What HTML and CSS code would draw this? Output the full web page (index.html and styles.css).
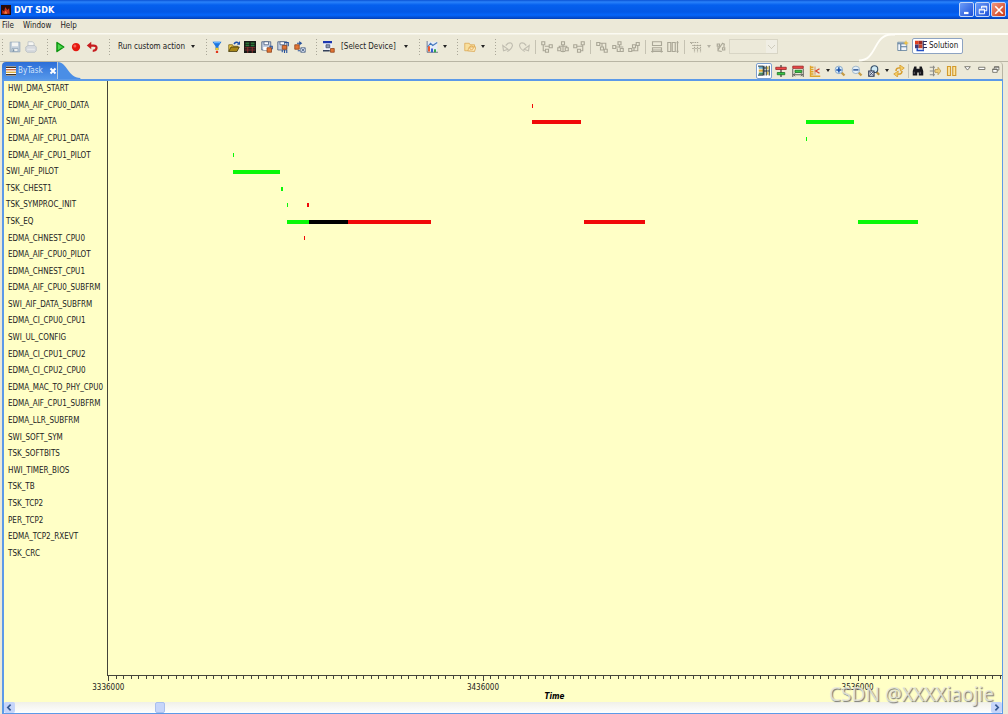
FILE: index.html
```html
<!DOCTYPE html>
<html lang="en">
<head>
<meta charset="utf-8">
<title>DVT SDK</title>
<link rel="stylesheet" href="styles.css">
</head>
<body>
<div class="window">
  <header class="titlebar">
    <svg class="app-icon" viewBox="0 0 16 16"><rect width="16" height="16" fill="#2a0b08"/><path d="M2 14V8l3 2 2-7 3 5 3-3 1 9z" fill="#c8301c"/><path d="M5 14l2-5 2 2 1 3z" fill="#f08040"/></svg>
    <h1 class="title">DVT SDK</h1>
    <button class="win-btn" aria-label="Minimize"><svg viewBox="0 0 16 16"><path d="M4 12h6" stroke="#fff" stroke-width="3"/></svg></button>
    <button class="win-btn" aria-label="Restore"><svg viewBox="0 0 16 16" fill="none" stroke="#fff" stroke-width="1.3"><path d="M6 6V3h7v6h-3M6 4h7M3 7h7v6H3zM3 8h7"/></svg></button>
    <button class="win-btn close" aria-label="Close"><svg viewBox="0 0 16 16"><path d="M3 3l10 10M13 3L3 13" stroke="#fff" stroke-width="2.2"/></svg></button>
  </header>

  <nav class="menubar">
    <button>File</button><button>Window</button><button>Help</button>
  </nav>

  <div class="toolbar">
    <div class="group g-file">
      <button class="tool" aria-label="Save"><svg viewBox="0 0 16 16"><path d="M1.500 1.500h13v13h-13z" fill="#c3cfdb" stroke="#91a6b8"/><path d="M4 2h8v5H4z" fill="#f4f5f2"/><path d="M4 10h8v4H4z" fill="#eef0ee" stroke="#91a6b8"/><path d="M6 11v3" stroke="#7890a6" stroke-width="2"/></svg></button>
      <button class="tool" aria-label="Print"><svg viewBox="0 0 16 16" stroke="#b4bbc2"><path d="M4 7V1h6l2 2v4" fill="#f6f6f2"/><path d="M1 8l3-2h9l2 2v5l-2 2H3l-2-2z" fill="#d7dade"/><path d="M3 11h10" stroke="#f4f4f4"/></svg></button>
    </div>
    <div class="group g-run">
      <button class="tool" aria-label="Run"><svg viewBox="0 0 16 16"><path d="M4 2l9 6-9 6z" fill="#4ed84e" stroke="#0c940f" stroke-width="2" stroke-linejoin="round"/></svg></button>
      <button class="tool" aria-label="Record"><svg viewBox="0 0 16 16"><circle cx="8" cy="8" r="5.500" fill="#e41910"/><circle cx="6.500" cy="6.500" r="2" fill="#fa6055"/></svg></button>
      <button class="tool" aria-label="Restart"><svg viewBox="0 0 16 16"><path d="M4 6h6c6 0 5 7-1 7" fill="none" stroke="#c61d20" stroke-width="3"/><path d="M1 6l6-5v10z" fill="#c61d20"/></svg></button>
    </div>
    <div class="group g-action">
      <button class="text-tool">Run custom action <span class="caret"></span></button>
    </div>
    <div class="group g-capture">
      <button class="tool" aria-label="Filter"><svg viewBox="0 0 16 16"><path d="M2 1h12l-4 6v5H6V7z" fill="#1c76df"/><path d="M4 2h8" stroke="#65b1ff" stroke-width="2"/><path d="M6 9h4v3H6z" fill="#f3cb28"/><path d="M6.500 13h3v3h-3z" fill="#e2361c"/></svg></button>
      <button class="tool" aria-label="Open"><svg viewBox="0 0 16 16"><path d="M1 14V5h5l1 2h6v3" fill="#f0ca48" stroke="#6c5610"/><path d="M1 14l3-6h11l-3 6z" fill="#a88718" stroke="#3e340c"/><path d="M8 4q3-4 6-1" fill="none" stroke="#1c50ae" stroke-width="2"/><path d="M12 5h4V0z" fill="#1c50ae"/></svg></button>
      <button class="tool" aria-label="Grid"><svg viewBox="0 0 16 16"><path d="M0 0h16v16H0z" fill="#181a18"/><path d="M2 2h5v5H2zM9 2h5v5H9z" fill="#2c7b3a"/><path d="M1 9h14M1 12h14M5 8v8M11 8v8" stroke="#a33636"/><path d="M1 4.500h14" stroke="#161816"/></svg></button>
      <button class="tool" aria-label="Save data"><svg viewBox="0 0 16 16"><path d="M1 1h12v11H1z" fill="#c5d1e2" stroke="#40577c"/><path d="M4 1h6v4H4z" fill="#fff" stroke="#40577c"/><path d="M3 8h6v4H3z" fill="#fff"/><path d="M8 9h6v6H8z" fill="#e27433" stroke="#8a3f18"/><path d="M11 7h4v4" fill="none" stroke="#27519b" stroke-width="1.500"/></svg></button>
      <button class="tool" aria-label="Save samples"><svg viewBox="0 0 16 16"><path d="M1 1h12v11H1z" fill="#c5d1e2" stroke="#40577c"/><path d="M4 1h6v4H4z" fill="#fff" stroke="#40577c"/><path d="M7 6h6v5H7z" fill="#e27433" stroke="#8a3f18"/><path d="M10 2h5v5" fill="none" stroke="#27519b" stroke-width="1.500"/><path d="M7 12v3M10 12v4M13 12v4" stroke="#27519b" stroke-width="1.500"/></svg></button>
      <button class="tool" aria-label="Transfer"><svg viewBox="0 0 16 16"><path d="M1 5h6v6H1z" fill="#e27433" stroke="#8a3f18"/><path d="M9 9h6v6H9z" fill="#dfe8f5" stroke="#40577c"/><path d="M10 10l4 4m0-4l-4 4" stroke="#40577c"/><path d="M4 3h5M5 13h3" stroke="#27519b" stroke-width="1.500"/><path d="M7 0v6l4-3z" fill="#27519b"/></svg></button>
    </div>
    <div class="group g-device">
      <button class="tool" aria-label="Device"><svg viewBox="0 0 16 16"><path d="M1 1h11v11H1z" fill="#eef1fa"/><path d="M0 1.500h12" stroke="#1b36b0" stroke-width="3"/><path d="M4 5h5v4H4z" fill="#8e9ab5" stroke="#404b66"/><path d="M0 13h9" stroke="#35415b" stroke-width="2"/><path d="M10 10h5v5h-5z" fill="#e27433" stroke="#8a3f18"/></svg></button>
      <button class="text-tool">[Select Device] <span class="caret"></span></button>
    </div>
    <div class="group g-menu">
      <button class="tool" aria-label="Charts"><svg viewBox="0 0 16 16"><path d="M1 1h14v13H1z" fill="#e6edf7"/><path d="M1.500 0v15H16" fill="none" stroke="#475676"/><path d="M2 8l4-5 3 3 6-4" fill="none" stroke="#4578bd" stroke-width="1.500"/><path d="M4 7v7" stroke="#ec5022" stroke-width="2.500"/><path d="M8 10v5" stroke="#2c55cf" stroke-width="2.500"/><path d="M12 11v4" stroke="#27a442" stroke-width="2.500"/></svg></button>
      <button class="drop" aria-label="Chart menu"><span class="caret"></span></button>
    </div>
    <div class="group g-menu">
      <button class="tool" aria-label="Folder"><svg viewBox="0 0 16 16"><path d="M1 13V3h6l1 2h6v8z" fill="#f8df9d" stroke="#dba550"/><path d="M5 13l2-5h9l-2 6z" fill="#fbe8b8" stroke="#dba550"/><circle cx="10" cy="9" r="2.500" fill="none" stroke="#e0a34d"/></svg></button>
      <button class="drop" aria-label="Folder menu"><span class="caret"></span></button>
    </div>
    <div class="group g-layout">
      <button class="tool" aria-label="Undo"><svg class="dim" viewBox="0 0 16 16"><path d="M5 6l3-3q5-2 6 3-1 5-7 8"/><path d="M1 6l1 7 6-2z"/></svg></button>
      <button class="tool" aria-label="Redo"><svg class="dim" viewBox="0 0 16 16"><path d="M11 6L8 3Q3 1 2 6q1 5 7 8"/><path d="M15 6l-1 7-6-2z"/></svg></button>
      <span class="rule"></span>
      <button class="tool" aria-label="Align left"><svg class="dim dark" viewBox="0 0 16 16"><path d="M1 1h4v4H1zM11 5h4v4h-4zM6 11h4v4H6zM3 5v8h3M5 7h6"/></svg></button>
      <button class="tool" aria-label="Align center"><svg class="dim dark" viewBox="0 0 16 16"><path d="M6 1h4v4H6zM1 9h4v4H1zM11 9h4v4h-4zM8 5v10M3 9V7h10v2M5 14h6"/></svg></button>
      <button class="tool" aria-label="Align right"><svg class="dim dark" viewBox="0 0 16 16"><path d="M11 1h4v4h-4zM1 5h4v4H1zM6 11h4v4H6zM13 5v8h-3M5 7h8"/></svg></button>
      <span class="rule"></span>
      <button class="tool" aria-label="Align top"><svg class="dim dark" viewBox="0 0 16 16"><path d="M1 2h4v4H1zM6 8h4v4H6zM11 11h4v4h-4zM5 3h8v8M8 3v5"/></svg></button>
      <button class="tool" aria-label="Align middle"><svg class="dim dark" viewBox="0 0 16 16"><path d="M1 6h4v4H1zM8 1h4v4H8zM11 10h4v4h-4zM5 8h10M10 5v4M7 10v4h4"/></svg></button>
      <button class="tool" aria-label="Align bottom"><svg class="dim dark" viewBox="0 0 16 16"><path d="M1 10h4v4H1zM6 5h4v4H6zM11 2h4v4h-4zM5 13h8V6M8 9v4"/></svg></button>
      <span class="rule"></span>
      <button class="tool" aria-label="Match width"><svg class="dim dark" viewBox="0 0 16 16"><path d="M2 1h12v5H2zM2 9h12v3H2zM2 14h12M3 13l-2 1 2 1M13 13l2 1-2 1"/></svg></button>
      <button class="tool" aria-label="Match height"><svg class="dim dark" viewBox="0 0 16 16"><path d="M1 2h4v12H1zM7 2h4v12H7zM14 2v12M13 3l1-2 1 2M13 13l1 2 1-2"/></svg></button>
      <span class="rule"></span>
      <button class="tool" aria-label="Snap"><svg class="dim dark" viewBox="0 0 16 16"><path d="M0 2h12M2 2v3M6 5v10M10 5v10M14 5v10" stroke-dasharray="2 1"/><path d="M3 6h12M3 10h12" stroke-dasharray="2 2"/></svg></button>
      <button class="drop" aria-label="Snap menu"><span class="caret pale"></span></button>
      <button class="tool" aria-label="Route"><svg class="dim dark" viewBox="0 0 16 16"><path d="M3 4h3v3H3zM10 9h3v3h-3zM4 12l6-9 3 2M4 8v5l5 1M12 3v5"/></svg></button>
      <select class="zoom" aria-label="Zoom" disabled><option></option></select>
    </div>
    <div class="perspective">
      <svg class="curve" viewBox="0 0 40 29" preserveAspectRatio="none"><path d="M0 27.500C20 27.500 16 1.500 36 1.500H40" fill="none" stroke="#fffef8" stroke-width="2"/></svg>
      <div class="perspective-body">
        <button class="tool" aria-label="Open perspective"><svg viewBox="0 0 16 16"><path d="M1 3h12v11H1z" fill="#f2f6fb" stroke="#567796"/><path d="M1 5h12M5 5v9M5 9h8" stroke="#567796" stroke-width="1.500"/><path d="M12 0l1 3 3 1-3 1-1 3-1-3-3-1 3-1z" fill="#f3c33c"/></svg></button>
        <button class="solution"><svg viewBox="0 0 16 16"><path d="M0 1h5v5H0z" fill="#df3f20"/><path d="M5 1h5v5H5z" fill="#9a2a24"/><path d="M0 6h5v5H0z" fill="#433a74"/><path d="M5 6h5v5H5z" fill="#c8452a"/><path d="M11 2h5M11 6h4M11 10h5M11 1v12" stroke="#2d3060" stroke-width="1.500"/><path d="M3 11v3h9" fill="none" stroke="#2450c4" stroke-width="2"/></svg>Solution</button>
      </div>
    </div>
  </div>

  <div class="viewbar">
    <div class="tab">
      <svg class="tab-icon" viewBox="0 0 16 16"><path d="M0 0h16v16H0z" fill="#fff"/><path d="M0 2h16M0 14h16" stroke="#3d342c" stroke-width="2.500"/><path d="M0 6h16" stroke="#d2582c" stroke-width="2"/><path d="M0 10h16" stroke="#d9a52d" stroke-width="2"/></svg>
      <span class="tab-name">ByTask</span>
      <button class="tab-close" aria-label="Close tab"><svg viewBox="0 0 16 16"><path d="M3 3l10 10M13 3L3 13" stroke="#fff" stroke-width="4"/></svg></button>
    </div>
    <svg class="tab-curve" viewBox="0 0 24 18"><path d="M0 0C10 0 11 17 24 17v1H0z" fill="#4a8ee6"/></svg>
    <div class="view-tools">
      <button class="tool pressed" aria-label="Sync"><svg viewBox="0 0 16 16"><path d="M1 2h6v3H1z" fill="#62a8c8"/><path d="M1 6h6v3H1z" fill="#e1ad39"/><path d="M1 10h6v3H1z" fill="#4c945e"/><path d="M0 1.500h7v12H0M8 1v13M8 4h3M8 8h3M11 1v13M15 1v13M11 8h4" fill="none" stroke="#1c2e38" stroke-width="1.300"/><path d="M12 2h2v4h-2zM12 9h2v4h-2z" fill="#dfbd48"/></svg></button>
      <button class="tool" aria-label="Center rows"><svg viewBox="0 0 16 16"><path d="M8 0v16" stroke="#2c2c2c" stroke-width="1.500"/><path d="M1 3h14v3H1z" fill="#f04848" stroke="#922020"/><path d="M3 10h10v3H3z" fill="#38c445" stroke="#176e20"/></svg></button>
      <button class="tool" aria-label="Measure"><svg viewBox="0 0 16 16"><path d="M1 1.500h14v3H1z" fill="#f04848" stroke="#922020"/><path d="M4 7h9v3H4z" fill="#38c445" stroke="#176e20"/><path d="M1 5v11M15 5v11M2 13h12M4 11l-2 2 2 2M12 11l2 2-2 2" fill="none" stroke="#333"/></svg></button>
      <button class="tool" aria-label="Markers"><svg viewBox="0 0 16 16"><path d="M2 1v14h13M2 3h4M2 6h4M2 9h4M2 12h4" fill="none" stroke="#e0a52c" stroke-width="1.800"/><path d="M8 2v11" stroke="#c37a4a"/><path d="M14 5L9 8l5 3" fill="none" stroke="#d84935" stroke-width="1.800"/></svg></button>
      <button class="drop" aria-label="Marker menu"><span class="caret"></span></button>
      <button class="tool" aria-label="Zoom in"><svg viewBox="0 0 16 16"><path d="M10 10l4 4" stroke="#c59b45" stroke-width="3"/><circle cx="6.500" cy="6.500" r="5" fill="#d9ecfa" stroke="#7297bd"/><path d="M6.500 3v7M3 6.500h7" stroke="#174fa7" stroke-width="2"/></svg></button>
      <button class="tool" aria-label="Zoom out"><svg viewBox="0 0 16 16"><path d="M10 10l4 4" stroke="#c59b45" stroke-width="3"/><circle cx="6.500" cy="6.500" r="5" fill="#e3eff8" stroke="#8ba6be"/><path d="M3 6.500h7" stroke="#315b98" stroke-width="2"/></svg></button>
      <button class="tool" aria-label="Zoom selection"><svg viewBox="0 0 16 16"><path d="M11 9l4 4" stroke="#b68a35" stroke-width="3"/><circle cx="8.500" cy="5.500" r="4.500" fill="#cfeaf5" stroke="#38506a" stroke-width="1.500"/><path d="M1 8h7v7H1z" fill="#e1e7f4" stroke="#26334f" stroke-width="1.500"/><path d="M2 9l5 5M7 9l-5 5" stroke="#26334f"/></svg></button>
      <button class="drop" aria-label="Zoom menu"><span class="caret"></span></button>
      <button class="tool" aria-label="Refresh"><svg viewBox="0 0 16 16" fill="none" stroke="#d49a28" stroke-width="2"><path d="M4 8q0-5 6-4M12 8q0 5-6 4"/><path d="M9 0l6 4-5 4zM7 8l-6 4 5 4z" fill="#f5ce68" stroke-width="1"/></svg></button>
      <span class="rule"></span>
      <button class="tool" aria-label="Find"><svg viewBox="0 0 16 16" fill="#17171c"><path d="M3 2h3v3h4V2h3l2 6v6H9v-4H7v4H1V8z"/><path d="M3 9v3M11 9v3" stroke="#787880"/></svg></button>
      <button class="tool" aria-label="Filter events"><svg viewBox="0 0 16 16"><path d="M1 3h7M1 8h8M1 13h7M6 1v14" fill="none" stroke="#8c8c88" stroke-width="1.500"/><path d="M8 6h4V3l4 5-4 5v-3H8z" fill="#edcd79" stroke="#b99a50"/></svg></button>
      <button class="tool" aria-label="Pause"><svg viewBox="0 0 16 16" fill="#fbe4a0" stroke="#d39a2c" stroke-width="1.500"><path d="M2 2h4v12H2zM9 2h4v12H9z"/></svg></button>
      <button class="mini" aria-label="View menu"><svg viewBox="0 0 16 16"><path d="M3 3h10l-5 6z" fill="#fff" stroke="#55544c" stroke-width="1.300"/></svg></button>
      <button class="mini" aria-label="Minimize view"><svg viewBox="0 0 16 16"><path d="M3 4h11v4H3z" fill="#fff" stroke="#55544c" stroke-width="1.300"/></svg></button>
      <button class="mini" aria-label="Restore view"><svg viewBox="0 0 16 16"><path d="M6 6V3h8v6h-3M6 4h8M3 7h8v6H3zM3 8h8" fill="#fff" stroke="#55544c" stroke-width="1.300"/></svg></button>
    </div>
  </div>

  <main class="view">
    <div class="chart">
      <ul class="labels" id="labels"></ul>
      <div class="plot" id="plot"></div>
      <div class="axis" id="axis"><span class="axis-title">Time</span></div>
    </div>
    <div class="scrollbar">
      <button class="scroll-btn" aria-label="Scroll left"><svg viewBox="0 0 16 16"><path d="M10 3L5 8l5 5" fill="none" stroke="#375a94" stroke-width="3"/></svg></button>
      <input class="scroll-range" type="range" min="0" max="1000" value="145" aria-label="Scroll position">
      <button class="scroll-btn" aria-label="Scroll right"><svg viewBox="0 0 16 16"><path d="M6 3l5 5-5 5" fill="none" stroke="#375a94" stroke-width="3"/></svg></button>
    </div>
    <p class="watermark">CSDN @XXXXiaojie</p>
  </main>
</div>
<script src="chart.js"></script>
</body>
</html>
```
FILE: styles.css
```css
* { box-sizing: border-box; }
body {
  margin: 0;
  font-family: "DejaVu Sans Condensed", "Open Sans", sans-serif;
  font-size: 8px;
  line-height: 12px;
  color: #222;
  background: #ece9d8;
}
button {
  font: inherit;
  color: inherit;
  background: none;
  border: 0;
  padding: 0;
  display: flex;
  align-items: center;
  justify-content: center;
  white-space: nowrap;
}
svg { display: block; }
.window { display: flex; flex-direction: column; height: 100vh; overflow: hidden; }

.titlebar {
  display: flex;
  align-items: center;
  gap: 1px;
  height: 19px;
  flex: none;
  padding: 0 2px 0 1px;
  background: linear-gradient(#0a52d4 0, #2a82fa 2px, #0560ee 5px, #0358e6 12px, #0566fa 15px, #0340b8 19px);
}
.app-icon { width: 10px; height: 10px; }
.title { flex: 1; margin: 0 0 0 2px; font-size: 9px; line-height: 12px; font-weight: bold; color: #fff; }
.win-btn {
  width: 15px;
  height: 15px;
  border: 1px solid #c4d6f8;
  border-radius: 2px;
  background: linear-gradient(135deg, #6c9cf8, #1c50d8);
}
.win-btn.close { background: linear-gradient(135deg, #f09880, #cc3814); }
.win-btn svg { width: 12px; height: 12px; }

.menubar { display: flex; gap: 9px; height: 14px; flex: none; padding-left: 2px; }

.toolbar {
  display: flex;
  height: 29px;
  flex: none;
  padding-left: 1px;
  border-bottom: 1px solid #b8b5a4;
  background: linear-gradient(#fbfaf2 0, #fbfaf2 1px, #ece9d8 2px);
}
.group {
  display: flex;
  align-items: center;
  height: 27px;
  flex: none;
  padding-left: 6px;
  background: repeating-linear-gradient(#aaa798 0 1px, transparent 1px 3px) 1px 6px / 1px 17px no-repeat;
}
.g-file { width: 45px; }
.g-run { width: 62px; }
.g-action { width: 97px; padding: 0 10px; }
.g-capture { width: 110px; padding: 0 7px 0 4px; justify-content: space-between; }
.g-device { width: 103px; }
.g-menu { width: 38px; }
.g-action .text-tool { width: 100%; justify-content: space-between; }
.g-device .text-tool { flex: 1; padding: 0 10px 0 4px; justify-content: space-between; }
.tool { width: 16px; height: 16px; flex: none; }
.tool svg { width: 12px; height: 12px; }
.tool svg.dim { fill: none; stroke: #c0bdb0; stroke-width: 1.5; }
.tool svg.dark { stroke: #aaa797; }
.drop { width: 9px; height: 16px; flex: none; }
.caret { border: 2px solid transparent; border-top: 3px solid #222; border-bottom: 0; }
.caret.pale { border-top-color: #b5b2a4; }
.rule { width: 1px; height: 14px; margin: 0 3px; background: #c5c2b2; flex: none; }
.zoom {
  appearance: none;
  width: 49px;
  height: 15px;
  border: 1px solid #d0cdbe;
  background: linear-gradient(45deg, transparent 45%, #c4c1b2 45% 60%, transparent 60%) 38px 5px / 4px 4px no-repeat,
    linear-gradient(-45deg, transparent 45%, #c4c1b2 45% 60%, transparent 60%) 41px 5px / 4px 4px no-repeat,
    linear-gradient(#f2f1ea, #f2f1ea) 36px 0 / 12px 13px no-repeat #ece9da;
}
.perspective { display: flex; flex: none; margin-left: auto; }
.curve { width: 36px; height: 29px; }
.perspective-body { display: flex; gap: 1px; width: 113px; height: 26px; padding-top: 3px; border-top: 2px solid #fffef8; }
.solution {
  height: 16px;
  gap: 2px;
  padding: 0 4px 0 2px;
  border: 1px solid #8da3c2;
  border-radius: 2px;
  background: #fff;
}
.solution svg { width: 12px; height: 12px; }

.viewbar {
  display: flex;
  align-items: flex-end;
  height: 17px;
  flex: none;
  margin: 0 5px 0 2px;
  border-right: 1px solid #b8b5a4;
  border-radius: 0 4px 0 0;
}
.tab {
  display: flex;
  align-items: center;
  height: 17px;
  padding-left: 4px;
  color: #fff;
  border-radius: 4px 0 0 0;
  background: linear-gradient(#2c6ed8, #5597ea);
}
.tab-icon { width: 10px; height: 10px; }
.tab-name { margin: 0 6px 0 2px; color: #d4e4fa; }
.tab-close svg { width: 8px; height: 8px; }
.tab-curve { width: 24px; height: 17px; }
.view-tools { display: flex; align-items: center; gap: 1px; height: 17px; margin-left: auto; }
.view-tools .drop { width: 7px; }
.view-tools .rule { margin: 0; }
.pressed { border: 1px solid #7d9fcf; border-radius: 2px; background: #fff; }
.mini { width: 13px; height: 16px; padding-bottom: 2px; }
.mini svg { width: 9px; height: 9px; }

.view {
  position: relative;
  display: flex;
  flex-direction: column;
  flex: 1;
  min-height: 0;
  margin: 0 5px 0 2px;
  border: solid #5c9ae8;
  border-width: 2px 1px 1px 2px;
  background: #ffffc6;
}
.chart { display: grid; grid-template: 1fr 26px / 103px 1fr; flex: 1; min-height: 0; }
.labels, .plot { display: grid; grid-template-rows: repeat(29, 1fr); align-items: center; margin: 0; padding: 0 0 114px; }
.labels { list-style: none; white-space: nowrap; }
.labels li { padding-left: 4px; }
.labels li.active { padding-left: 2px; }
.plot { grid-template-columns: 1fr; border: solid #44443a; border-width: 0 0 1px 1px; }
.bar { grid-column: 1; height: 4px; }
.green { background: #08f808; }
.red { background: #f00808; }
.black { background: #000; }
.axis { position: relative; grid-column: 2; }
.tick { position: absolute; top: 0; width: 1px; height: 3px; background: #44443a; }
.tick.major { height: 5px; }
.tick-label { position: absolute; top: 6px; transform: translateX(-50%); }
.axis-title { display: block; padding-top: 15px; text-align: center; font-weight: bold; font-style: italic; color: #000; }

.scrollbar { display: flex; height: 11px; flex: none; background: linear-gradient(#f0f0e8, #fff); }
.scroll-btn { width: 11px; height: 11px; border-radius: 2px; background: #c6d5fa; }
.scroll-btn svg { width: 9px; height: 9px; }
.scroll-range { appearance: none; flex: 1; min-width: 0; height: 11px; margin: 0; background: none; }
.scroll-range::-webkit-slider-thumb { appearance: none; width: 10px; height: 11px; border: 1px solid #a9bfee; border-radius: 2px; background: #c6d5fa; }
.watermark {
  position: absolute;
  right: 8px;
  bottom: 6px;
  margin: 0;
  font-family: "Noto Sans", sans-serif;
  font-size: 19px;
  line-height: 26px;
  color: rgba(232, 232, 222, .85);
  text-shadow: 1px 1px 1px #777;
}
```
FILE: chart.js
```js
const tasks = [
  "HWI_DMA_START", "EDMA_AIF_CPU0_DATA", "SWI_AIF_DATA", "EDMA_AIF_CPU1_DATA",
  "EDMA_AIF_CPU1_PILOT", "SWI_AIF_PILOT", "TSK_CHEST1", "TSK_SYMPROC_INIT", "TSK_EQ",
  "EDMA_CHNEST_CPU0", "EDMA_AIF_CPU0_PILOT", "EDMA_CHNEST_CPU1", "EDMA_AIF_CPU0_SUBFRM",
  "SWI_AIF_DATA_SUBFRM", "EDMA_CI_CPU0_CPU1", "SWI_UL_CONFIG", "EDMA_CI_CPU1_CPU2",
  "EDMA_CI_CPU2_CPU0", "EDMA_MAC_TO_PHY_CPU0", "EDMA_AIF_CPU1_SUBFRM", "EDMA_LLR_SUBFRM",
  "SWI_SOFT_SYM", "TSK_SOFTBITS", "HWI_TIMER_BIOS", "TSK_TB", "TSK_TCP2", "PER_TCP2",
  "EDMA_TCP2_RXEVT", "TSK_CRC"
];
const active = ["SWI_AIF_DATA", "SWI_AIF_PILOT", "TSK_CHEST1", "TSK_SYMPROC_INIT", "TSK_EQ"];

// task, start, end, colour
const events = [
  ["EDMA_AIF_CPU0_DATA", 3448950, 3449200, "red"],
  ["SWI_AIF_DATA", 3448950, 3462000, "red"],
  ["SWI_AIF_DATA", 3522150, 3535000, "green"],
  ["EDMA_AIF_CPU1_DATA", 3522150, 3522400, "green"],
  ["EDMA_AIF_CPU1_PILOT", 3368920, 3369180, "green"],
  ["SWI_AIF_PILOT", 3369050, 3381600, "green"],
  ["TSK_CHEST1", 3381900, 3382500, "green"],
  ["TSK_SYMPROC_INIT", 3383500, 3383750, "green"],
  ["TSK_SYMPROC_INIT", 3388900, 3389400, "red"],
  ["TSK_EQ", 3383500, 3389350, "green"],
  ["TSK_EQ", 3389350, 3399800, "black"],
  ["TSK_EQ", 3399800, 3421950, "red"],
  ["TSK_EQ", 3462850, 3479100, "red"],
  ["TSK_EQ", 3536050, 3552100, "green"],
  ["EDMA_CHNEST_CPU0", 3388150, 3388400, "red"]
];

const from = 3335650;
const to = 3574550;
const percent = (span) => (span / (to - from)) * 100 + "%";

const labels = document.getElementById("labels");
for (const task of tasks) {
  const item = document.createElement("li");
  item.textContent = task;
  if (active.includes(task)) item.className = "active";
  labels.append(item);
}

const plot = document.getElementById("plot");
for (const [task, start, end, colour] of events) {
  const bar = document.createElement("span");
  bar.className = "bar " + colour;
  bar.style.gridRow = tasks.indexOf(task) + 1;
  bar.style.marginLeft = percent(start - from);
  bar.style.width = percent(end - start);
  plot.append(bar);
}

const axis = document.getElementById("axis");
for (let time = 3336000; time <= to; time += 2000) {
  const major = (time - 3336000) % 100000 === 0;
  const tick = document.createElement("span");
  tick.className = major ? "tick major" : "tick";
  tick.style.left = percent(time - from);
  axis.append(tick);
  if (major) {
    const label = document.createElement("span");
    label.className = "tick-label";
    label.style.left = percent(time - from);
    label.textContent = time;
    axis.append(label);
  }
}
```
